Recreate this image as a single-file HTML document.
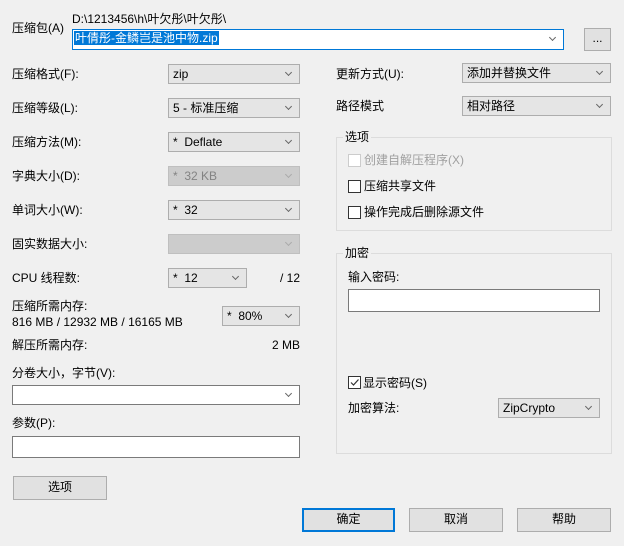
<!DOCTYPE html>
<html><head><meta charset="utf-8"><style>
*{box-sizing:border-box;margin:0;padding:0}
body{width:624px;height:546px;background:#f0f0f0;position:relative;overflow:hidden;font-family:"Liberation Sans","Noto Sans CJK SC",sans-serif;font-size:12px;color:#000}
.a{position:absolute;white-space:nowrap;line-height:14px}
.cb{position:absolute;background:#e5e5e5;border:1px solid #adadad;height:20px;padding-left:4px;line-height:18px}
.cb.d{background:#ccc;border-color:#bfbfbf;color:#838383}
.cb.w{background:#fff;border-color:#7a7a7a}
.cb::after{content:"";position:absolute;right:8px;top:5px;width:4px;height:4px;border-right:1px solid #666;border-bottom:1px solid #666;transform:rotate(45deg)}
.cb.d::after{border-color:#aaa}
.in{position:absolute;background:#fff;border:1px solid #7a7a7a}
.btn{position:absolute;background:#e1e1e1;border:1px solid #adadad;text-align:center;line-height:21px}
.grp{position:absolute;border:1px solid #dcdcdc}
.lg{position:absolute;background:#f0f0f0;padding:0 2px;line-height:14px}
.ck{position:absolute;width:13px;height:13px;border:1px solid #333;background:#fff}
</style></head><body>
<div class="a" style="left:12px;top:21px">压缩包(A)</div>
<div class="a" style="left:72px;top:12px">D:\1213456\h\叶欠彤\叶欠彤\</div>
<div class="cb w" style="left:72px;top:29px;width:492px;height:21px;border-color:#0078d7;padding-left:1px;line-height:17px"><span style="background:#0078d7;color:#fff;padding:0 1px">叶倩彤-金鳞岂是池中物.zip</span></div>
<div class="btn" style="left:584px;top:28px;width:27px;height:23px;line-height:18px">...</div>

<div class="a" style="left:12px;top:67px">压缩格式(F):</div>
<div class="cb" style="left:168px;top:64px;width:132px">zip</div>
<div class="a" style="left:12px;top:101px">压缩等级(L):</div>
<div class="cb" style="left:168px;top:98px;width:132px">5 - 标准压缩</div>
<div class="a" style="left:12px;top:135px">压缩方法(M):</div>
<div class="cb" style="left:168px;top:132px;width:132px">* &nbsp;Deflate</div>
<div class="a" style="left:12px;top:169px">字典大小(D):</div>
<div class="cb d" style="left:168px;top:166px;width:132px">* &nbsp;32 KB</div>
<div class="a" style="left:12px;top:203px">单词大小(W):</div>
<div class="cb" style="left:168px;top:200px;width:132px">* &nbsp;32</div>
<div class="a" style="left:12px;top:237px">固实数据大小:</div>
<div class="cb d" style="left:168px;top:234px;width:132px"></div>
<div class="a" style="left:12px;top:271px">CPU 线程数:</div>
<div class="cb" style="left:168px;top:268px;width:79px">* &nbsp;12</div>
<div class="a" style="left:280px;top:271px">/ 12</div>
<div class="a" style="left:12px;top:299px">压缩所需内存:</div>
<div class="a" style="left:12px;top:315px">816 MB / 12932 MB / 16165 MB</div>
<div class="cb" style="left:222px;top:306px;width:78px">* &nbsp;80%</div>
<div class="a" style="left:12px;top:338px">解压所需内存:</div>
<div class="a" style="left:272px;top:338px">2 MB</div>
<div class="a" style="left:12px;top:366px">分卷大小，字节(V):</div>
<div class="cb w" style="left:12px;top:385px;width:288px"></div>
<div class="a" style="left:12px;top:416px">参数(P):</div>
<div class="in" style="left:12px;top:436px;width:288px;height:22px"></div>

<div class="a" style="left:336px;top:67px">更新方式(U):</div>
<div class="cb" style="left:462px;top:63px;width:149px">添加并替换文件</div>
<div class="a" style="left:336px;top:99px">路径模式</div>
<div class="cb" style="left:462px;top:96px;width:149px">相对路径</div>

<div class="grp" style="left:336px;top:137px;width:276px;height:94px"></div>
<div class="lg" style="left:343px;top:130px">选项</div>
<div class="ck" style="left:348px;top:154px;border-color:#ccc"></div>
<div class="a" style="left:364px;top:153px;color:#a0a0a0">创建自解压程序(X)</div>
<div class="ck" style="left:348px;top:180px"></div>
<div class="a" style="left:364px;top:179px">压缩共享文件</div>
<div class="ck" style="left:348px;top:206px"></div>
<div class="a" style="left:364px;top:205px">操作完成后删除源文件</div>

<div class="grp" style="left:336px;top:253px;width:276px;height:201px"></div>
<div class="lg" style="left:343px;top:246px">加密</div>
<div class="a" style="left:348px;top:270px">输入密码:</div>
<div class="in" style="left:348px;top:289px;width:252px;height:23px"></div>
<div class="ck" style="left:348px;top:376px"><svg width="11" height="11" style="position:absolute;left:0;top:0"><path d="M2 5.5 L4.5 8 L9.5 2.5" fill="none" stroke="#333" stroke-width="1.2"/></svg></div>
<div class="a" style="left:363px;top:376px">显示密码(S)</div>
<div class="a" style="left:348px;top:401px">加密算法:</div>
<div class="cb" style="left:498px;top:398px;width:102px">ZipCrypto</div>

<div class="btn" style="left:13px;top:476px;width:94px;height:24px">选项</div>
<div class="btn" style="left:302px;top:508px;width:93px;height:24px;border:2px solid #0078d7;line-height:19px">确定</div>
<div class="btn" style="left:409px;top:508px;width:94px;height:24px">取消</div>
<div class="btn" style="left:517px;top:508px;width:94px;height:24px">帮助</div>
</body></html>
